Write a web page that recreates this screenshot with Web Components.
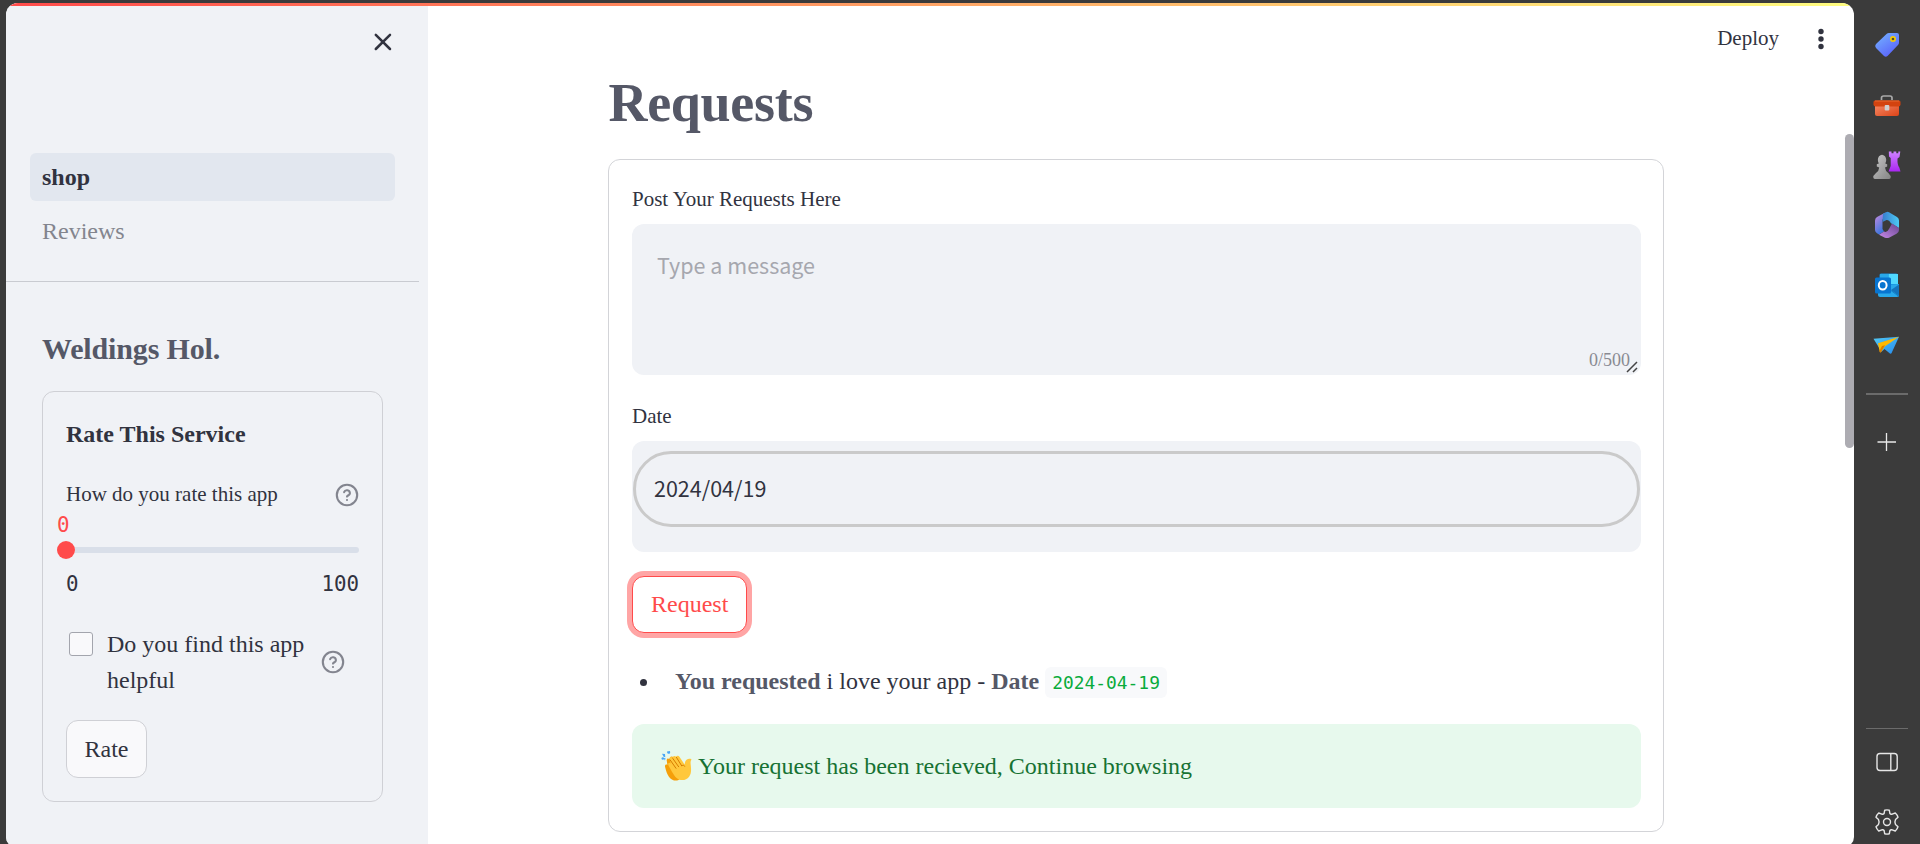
<!DOCTYPE html>
<html lang="en">
<head>
<meta charset="utf-8">
<title>Requests</title>
<style>
html,body{margin:0;height:844px;overflow:hidden;background:#3b3b3b}
body{font-family:"Liberation Serif",serif;font-size:24px;line-height:36px;color:#31333f;
--sans:"Noto Sans CJK SC","Noto Sans",sans-serif;--mono:"DejaVu Sans Mono","Liberation Mono",monospace;--line:#cfd0d5;--red:#ff4b4b}
</style>
</head>
<body>
<browser-shell>
  <app-sidebar slot="side">
    <nav-item slot="nav" active>shop</nav-item>
    <nav-item slot="nav">Reviews</nav-item>
    <span slot="title">Weldings Hol.</span>
    <rate-card></rate-card>
  </app-sidebar>
  <app-main slot="main">
    <span slot="title">Requests</span>
    <request-form></request-form>
  </app-main>
  <edge-rail slot="rail"></edge-rail>
</browser-shell>
<script>
function define(name, html){
  customElements.define(name, class extends HTMLElement{
    constructor(){
      super();
      const t = document.createElement('template');
      t.innerHTML = html;
      this.attachShadow({mode:'open'}).append(t.content.cloneNode(true));
    }
  });
}

define('browser-shell', `
<style>
:host{display:flex;width:1920px;height:844px;box-sizing:border-box;padding:3px 0 0 6px;overflow:hidden}
.window{position:relative;flex:none;display:flex;width:1848px;height:844px;border-radius:12px 12px 10px 10px;overflow:hidden;background:#fff}
.window::before{content:"";position:absolute;z-index:2;left:0;top:0;right:0;height:3px;background:linear-gradient(90deg,#ff4b4b,#fffd80)}
.thumb{position:absolute;right:0;top:131px;width:9px;height:314px;border-radius:4.5px;background:#adacb2}
</style>
<div class="window"><slot name="side"></slot><slot name="main"></slot><div class="thumb"></div></div>
<slot name="rail"></slot>`);

define('app-sidebar', `
<style>
:host{display:block;flex:none;width:422px;background:#f0f2f6}
header{height:150px;display:flex;justify-content:flex-end;padding:29px 35px 0 0;box-sizing:border-box}
nav{display:flex;flex-direction:column;gap:6px;padding:0 33px 0 24px}
hr{border:0;height:1px;margin:26px 9px 0 0;background:#c9cbd1}
h2{margin:49px 0 24px 36px;font-size:30px;line-height:36px;font-weight:700;letter-spacing:-.15px;color:#555867}
.body{margin:0 45px 0 36px}
</style>
<header><svg width="20" height="26" viewBox="0 0 20 26"><path d="M2.8 2.8 17 17M17 2.8 2.8 17" stroke="#31333f" stroke-width="2.5" stroke-linecap="round"/></svg></header>
<nav><slot name="nav"></slot></nav><hr>
<h2><slot name="title"></slot></h2>
<div class="body"><slot></slot></div>`);

define('nav-item', `
<style>
:host{display:block;height:48px;line-height:48px;padding-left:12px;border-radius:6px;color:#83858e}
:host([active]){background:#e2e7ef;color:#31333f;font-weight:700}
</style><slot></slot>`);

define('help-icon', `
<style>:host{display:block;flex:none;width:24px;height:24px}svg{display:block}</style>
<svg width="24" height="24" viewBox="0 0 24 24" fill="none" stroke="#83858f" stroke-width="2.100" stroke-linecap="round" stroke-linejoin="round"><circle cx="12" cy="12" r="10.2"/><path d="M9.1 9.2a3 3 0 0 1 5.8 1c0 2-2.9 2.400-2.9 3.4M12 17h.01"/></svg>`);

define('st-button', `
<style>
:host{display:flex;width:fit-content;height:58px;box-sizing:border-box;align-items:center;padding:0 17.500px;border:1px solid var(--line);border-radius:12px;background:#f9f9fb}
:host([focused]){height:57px;padding:0 18px 1px;border-color:var(--red);color:var(--red);background:#fff;box-shadow:0 0 0 5px #ffa5a5}
</style><slot></slot>`);

define('rate-card', `
<style>
:host{display:block;box-sizing:border-box;height:411px;border:1px solid var(--line);border-radius:12px;padding:24px 23px 0}
h3{margin:0;font-size:24px;line-height:36px}
.label{display:flex;justify-content:space-between;height:24px;margin-top:31px;font-size:21px;line-height:22px}
.val,.ticks{font-family:var(--mono);font-size:20.800px;line-height:24px}
.val{margin:6px 0 0 -9px;color:var(--red)}
.slider{display:flex;align-items:center;height:18px;margin:4px 0 0 -9px}
.slider i{width:18px;height:18px;border-radius:50%;background:var(--red)}
.slider b{flex:1;height:6px;border-radius:0 3px 3px 0;background:#d9dfe9}
.ticks{display:flex;justify-content:space-between;margin-top:13px}
.check{display:flex;margin:30px 0 22px 3px}
.box{width:24px;height:24px;box-sizing:border-box;border:1px solid #a3a5ad;border-radius:3px;background:#f9f9fb;margin-top:6px}
.text{width:202px;margin:0 12px 0 14px}
.check help-icon{margin-top:24px}
</style>
<h3>Rate This Service</h3>
<div class="label"><span>How do you rate this app</span><help-icon></help-icon></div>
<div class="val">0</div>
<div class="slider"><i></i><b></b></div>
<div class="ticks"><span>0</span><span>100</span></div>
<div class="check"><div class="box"></div><div class="text">Do you find this app helpful</div><help-icon></help-icon></div>
<st-button>Rate</st-button>`);

define('app-main', `
<style>
:host{display:block;flex:1}
header{display:flex;justify-content:flex-end;align-items:center;height:68px;box-sizing:border-box;padding:3px 23px 0 0;font-size:21px;gap:32px}
header span{margin-top:-2px}
h1{margin:0 0 24px 180.500px;font-size:54px;line-height:64px;letter-spacing:-.300px;color:#555867}
.body{width:1056px;margin-left:180px}
svg{display:block}
</style>
<header><span>Deploy</span><svg width="20" height="24" viewBox="0 0 20 24" fill="#31333f"><circle cx="10" cy="4.500" r="2.7"/><circle cx="10" cy="12" r="2.7"/><circle cx="10" cy="19.500" r="2.7"/></svg></header>
<h1><slot name="title"></slot></h1>
<div class="body"><slot></slot></div>`);

define('request-form', `
<style>
:host{display:block;box-sizing:border-box;height:673px;border:1px solid #d3d4d8;border-radius:12px;padding:27px 22px 0 23px}
.label{font-size:21px;line-height:24px;margin-bottom:13px}
.area{display:flex;flex-direction:column;justify-content:space-between;height:151px;box-sizing:border-box;padding:23px 11px 3px 25px;border-radius:12px;background:#f0f2f6;margin-bottom:29px;position:relative}
.ph{font-family:var(--sans);font-size:21.500px;color:#a6a7ae}
.count{align-self:flex-end;font-size:18px;line-height:24px;color:#898a92}
.grip{position:absolute;right:3px;bottom:2px}
.date{height:111px;box-sizing:border-box;padding:10px 1px 0;border-radius:12px;background:#f0f2f6;margin-bottom:24px}
.pill{display:flex;align-items:center;height:76px;box-sizing:border-box;border:3px solid #cacaca;border-radius:38px;padding:0 0 3px 18px;font-family:var(--sans);font-size:21.500px}
ul{display:flex;align-items:center;list-style:none;margin:31px 0 24px;padding:0 0 0 8px;height:36px}
.dot{width:7px;height:7px;border-radius:50%;background:#31333f;margin:0 28px 0 0}
li{white-space:pre}
b{color:#555867}
code{font-family:var(--mono);font-size:17.900px;color:#09ab3b;background:#f8f9fb;border-radius:6px;padding:5px 7px}
</style>
<div class="label">Post Your Requests Here</div>
<div class="area"><span class="ph">Type a message</span><span class="count">0/500</span>
<svg class="grip" width="12" height="12" viewBox="0 0 12 12" stroke="#444" stroke-width="1.5"><path d="M1 11 11 1M7 11l4-4"/></svg></div>
<div class="label">Date</div>
<div class="date"><div class="pill">2024/04/19</div></div>
<st-button focused>Request</st-button>
<ul><span class="dot"></span><li><b>You requested</b> i love your app - <b>Date</b> <code>2024-04-19</code></li></ul>
<success-alert>Your request has been recieved, Continue browsing</success-alert>`);

define('success-alert', `
<style>:host{display:flex;align-items:center;height:84px;box-sizing:border-box;padding-left:29px;gap:6px;border-radius:12px;background:#e7f9ed;color:#177233}</style>
<svg width="31" height="30" viewBox="0 0 31 30">
<g fill="#4ba6f5"><circle cx="1.8" cy="7.5" r="1.3"/><path d="M1 2.8 4 3l.3 3.2-1.7-.5z"/><path d="m6 .4 3-.3.2 1.6-1 1.4-1.9-.8zM2.6 7l2 .3-.7 2.3z"/></g>
<path d="M4 15.5c-.2-2 1.2-2.6 2.4-1.7L5.7 9.3c0-2 1.8-2.2 2.6-1 .3-2.8 2.2-3.6 4-2.3L22 14v9c-1 5-5 7.200-9 6.400C7 28 5 20 4 15.500z" fill="#f59f0a"/>
<path d="M8.700 8.200c-.5-1.800 1.500-3 2.800-1.300.2-2 2.300-2.600 3.600-1.200.7-1.300 2.600-1.300 3.500.2l4.900 7.500.8-3c.7-2 3-3.200 5.200-2.600l1 .6c-1.300 1.600-.9 3.500-.7 6 .4 4.400.7 8.200-1.700 11.300-3 4-9 4.600-12.800 1-2.500-2.500-6.400-9.500-8-12.800-.6-1.900 1.100-2.800 2.300-1.300z" fill="#ffc83d"/>
<path d="m8.900 8.600 6.300 9M11.600 7.200l6.300 8.900M15.200 6l5.600 9c1.300-1.300 2.500-.8 3 .6" fill="none" stroke="#d67d00" stroke-width="1"/>
</svg><span><slot></slot></span>`);

define('edge-rail', `
<style>
:host{display:flex;flex-direction:column;align-items:center;flex:1;height:841px}
svg{display:block;flex:none;overflow:visible}
.apps{display:flex;flex-direction:column;gap:32px;padding-top:28px}
hr{width:42px;height:2px;border:0;margin:34px 0 0;background:#6b6b6b;flex:none}
.plus{margin-top:37px}
.low{height:1px;margin-top:276px}
.panel{margin-top:23px}.gear{margin-top:37px}
</style>
<div class="apps">
<svg width="28" height="28" viewBox="0 0 28 28"><defs><linearGradient id="tag" x1="0" y1="0" x2=".7" y2="1"><stop stop-color="#76b7ff"/><stop offset="1" stop-color="#5961fa"/></linearGradient></defs><path d="M13.500 3Q14.500 2 16 2H24Q26 2 26 4V11.500Q26 13 25 14L14.500 25Q12.800 26.500 11 25L3 17Q1.300 15 3 13Z" fill="url(#tag)"/><circle cx="20" cy="8" r="2.200" fill="#514c2d" stroke="#f4ca0a" stroke-width="1.700"/></svg>
<svg width="28" height="28" viewBox="0 0 28 28"><defs><linearGradient id="bag" x1="0" y1="0" x2="1" y2="1"><stop stop-color="#f68b67"/><stop offset="1" stop-color="#dc4317"/></linearGradient></defs><path d="M8.500 9V6.700Q8.500 5 10.700 5H17Q19 5 19 6.700V9" fill="none" stroke="#a9a9a9" stroke-width="1.700"/><path d="M2 13H26V23Q26 25 24 25H4Q2 25 2 23Z" fill="url(#bag)"/><path d="M2 9.500H26Q27.500 9.500 27.500 11V13.500Q27.500 15.500 25.500 15.500H2.500Q.5 15.500 .5 13.500V11Q.5 9.500 2 9.500Z" fill="#d3430f"/><path d="M2 10H26" stroke="#e96b31"/><rect x="11.700" y="14" width="4.600" height="5.500" rx="1" fill="#cfcfcf"/></svg>
<svg width="28" height="28" viewBox="0 0 28 28"><defs><linearGradient id="rook" x1="0" y1="0" x2="0" y2="1"><stop stop-color="#ce83ff"/><stop offset="1" stop-color="#aa26f2"/></linearGradient><linearGradient id="pawn" x1="0" y1="0" x2="1" y2="1"><stop stop-color="#c7c7c7"/><stop offset="1" stop-color="#858585"/></linearGradient></defs><path d="M15.800.5h2.700V2.300h2V.5h2.800V2.300h2V.5h2L26.500 6 24.500 7.500Q24.200 14 26.300 16.500L27.500 20.500H15.500L17.700 15V7L16 5.500Z" fill="url(#rook)"/><path d="M5.800 12.500Q3.800 8.800 6 5.300 9 2 12 5.300 14.300 8.800 12.300 12.500L14.200 13.200V15.500L12 16.500Q12.300 20 15.300 22L17.700 25Q18 28 16 28H2Q0 28 .3 25L3 22Q6 20 6.200 16.500L3.800 15.500V13.200Z" fill="url(#pawn)"/></svg>
<svg width="28" height="28" viewBox="0 0 28 28"><defs><linearGradient id="m1" x1="0" y1="0" x2=".5" y2="1"><stop stop-color="#ce8bdf"/><stop offset="1" stop-color="#3976dd"/></linearGradient><linearGradient id="m2"><stop stop-color="#397dce"/><stop offset="1" stop-color="#4ccaf4"/></linearGradient><linearGradient id="m3" x1="0" y1="1" x2="1" y2="0"><stop stop-color="#c789e8"/><stop offset="1" stop-color="#68458f"/></linearGradient></defs><path d="M12.500 1.500 4 6Q2 7.200 2 9.800V19Q2 21 4 22.300L6 23.500 11 20.500 9.500 18V9Z" fill="url(#m1)"/><path d="M10 2.700 13 1.200Q14.500.5 16 1.200L24 6Q26 7 26 9.500V17L18 12.200Q16 8.500 13.500 9L9.500 11Z" fill="url(#m2)"/><path d="M6 23.700 11 20.500Q14 22 16 18L19 12.600 26 17V19Q26 21.500 23.500 22.800L16 26.700Q14 27.500 12 26.700Z" fill="url(#m3)"/></svg>
<svg width="28" height="28" viewBox="0 0 28 28"><path d="M8 2.500H23Q25 2.500 25 4.500V17H6.500V4Q6.500 2.500 8 2.500Z" fill="#1490df"/><path d="M15.500 3H25V13H15.500Z" fill="#50d9ff"/><path d="M7 3H15.500V9H7Z" fill="#29a8e9"/><path d="M5 15 26 13V24Q26 26 24 26H7Q5 26 5 24Z" fill="#28a8ea"/><path d="M18 19 26 13.500V25Z" fill="#1474bd"/><path d="M14 16.500 26 25.500" stroke="#147fc8"/><rect x="2" y="6.500" width="16" height="16" rx="1.500" fill="#0875d1"/><ellipse cx="9.700" cy="14.300" rx="3.900" ry="4.300" fill="none" stroke="#fff" stroke-width="2"/></svg>
<svg width="28" height="28" viewBox="0 0 28 28"><defs><linearGradient id="fly" x1="0" y1="0" x2="1" y2="1"><stop stop-color="#52caf5"/><stop offset="1" stop-color="#268bed"/></linearGradient></defs><g transform="translate(0 .8)"><path d="M.5 7 26 5 18.500 21.500Q17.500 22.500 16 21L11.500 17.300 8.500 20Z" fill="url(#fly)"/><path d="M5 11.500 26 5 12 14.500 8 20.300Q6.800 21.500 6.500 19Z" fill="#ffb900"/><path d="M9 14.200 12 13.500 8 20.300Q6.800 21.500 6.500 19Z" fill="#d97d00"/></g></svg>
</div>
<hr>
<svg class="plus" width="20" height="20" viewBox="0 0 20 20" stroke="#e9e9e9" stroke-width="1.300"><path d="M.5 10H19M9.500 1V19"/></svg>
<hr class="low">
<svg class="panel" width="24" height="20" viewBox="0 0 24 20" fill="none" stroke="#e6e6e6" stroke-width="1.400"><rect x="2" y="1.500" width="20.200" height="17" rx="3"/><path d="M15.800 1.500V18.500"/></svg>
<svg class="gear" width="26" height="26" viewBox="0 0 26 26" fill="none" stroke="#e6e6e6" stroke-width="1.400" stroke-linejoin="round"><path d="M10.700 1.200Q13 .6 15.300 1.200L15.900 4.500Q16.600 5.500 18.100 5.200L21.300 4Q23.200 5.700 24 8.200L21.500 10.600Q20.300 13 21.500 15.400L24 17.800Q23.200 20.300 21.300 22L18.100 20.800Q16.600 20.500 15.900 21.500L15.300 24.800Q13 25.400 10.700 24.800L10.100 21.500Q9.400 20.500 7.900 20.800L4.700 22Q2.800 20.300 2 17.800L4.500 15.400Q5.700 13 4.500 10.600L2 8.200Q2.800 5.700 4.700 4L7.900 5.200Q9.400 5.500 10.100 4.500Z"/><circle cx="13" cy="13" r="3.500"/></svg>`);
</script>
</body>
</html>
